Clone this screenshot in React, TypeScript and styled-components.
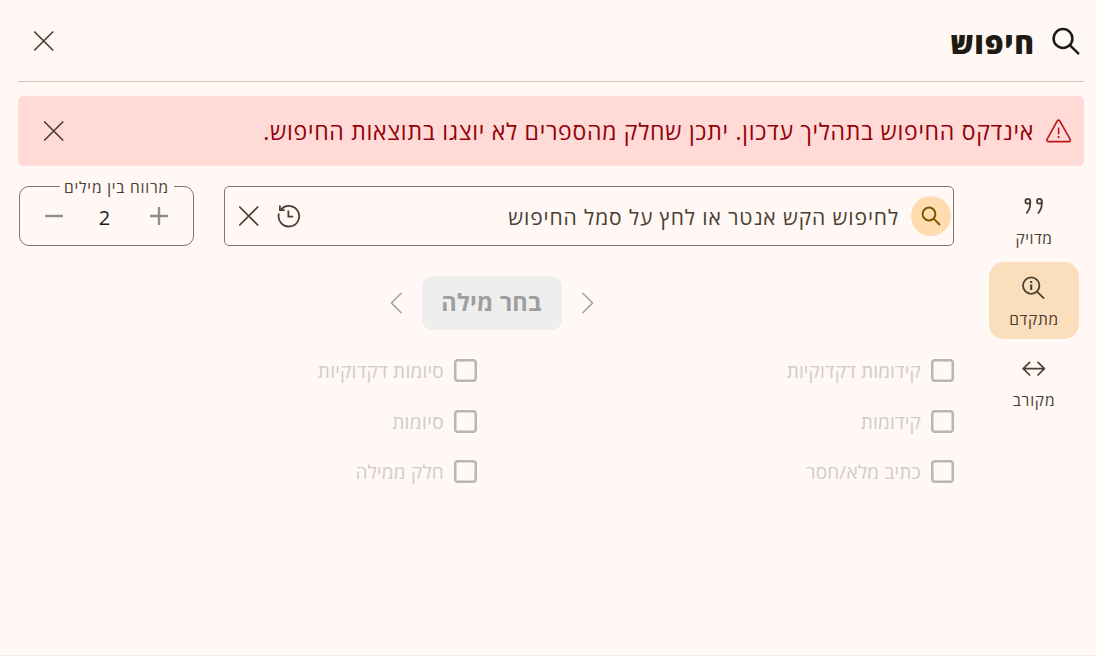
import { ReactNode, useState } from 'react';
import styled, { createGlobalStyle, css } from 'styled-components';

const GlobalStyle = createGlobalStyle`
  *,
  *::before,
  *::after {
    box-sizing: border-box;
  }

  body {
    margin: 0;
    background-color: #fff8f5;
    color: #1f1b13;
    font-family: 'Open Sans', 'Noto Sans', 'DejaVu Sans', sans-serif;
  }

  button {
    border: none;
    padding: 0;
    margin: 0;
    background: none;
    color: inherit;
    font-family: inherit;
  }

  svg {
    display: block;
    flex-shrink: 0;
    fill: none;
    stroke: currentColor;
  }
`;

interface TextProps {
  $tracking?: number;
}

const Page = styled.div`
  height: 656px;
  padding: 0 12px 0 18px;
  overflow: hidden;
  border-bottom: 1px solid #f1ede9;
`;

const Header = styled.header`
  display: flex;
  align-items: center;
  height: 82px;
  padding: 0 4px 0 15.5px;
  border-bottom: 1px solid #d2c5b4;
`;

const Title = styled.h1<TextProps>`
  margin: 5px 17.5px 0 auto;
  font-size: 30px;
  font-weight: 800;
  line-height: 44px;
  letter-spacing: ${(props) => props.$tracking ?? 0}px;
`;

const IconButton = styled.button`
  display: grid;
  place-items: center;
  color: #4a4032;
`;

const Banner = styled.div`
  display: flex;
  align-items: center;
  height: 70px;
  margin: 14px 0 20px;
  padding: 0 12px 0 25.5px;
  border-radius: 5px;
  background-color: #ffdad6;
  color: #ba1a1a;
`;

const BannerText = styled.p<TextProps>`
  margin: 0 12px 0 auto;
  color: #93000a;
  font-size: 23px;
  line-height: 34px;
  white-space: nowrap;
  letter-spacing: ${(props) => props.$tracking ?? 0}px;
`;

const Body = styled.div`
  display: flex;
`;

const Modes = styled.nav`
  display: flex;
  flex-direction: column;
  gap: 4px;
  width: 90px;
  margin: -5px 5px 0 35px;
`;

const ModeButton = styled.button<{ $active: boolean }>`
  display: flex;
  flex-direction: column;
  align-items: center;
  gap: 8px;
  height: 77px;
  padding-top: 13px;
  border-radius: 15px;
  color: #4a4032;

  ${(props) =>
    props.$active &&
    css`
      background-color: #fbdebc;
    `}
`;

const ModeLabel = styled.span<TextProps>`
  font-size: 15.5px;
  line-height: 24px;
  letter-spacing: ${(props) => props.$tracking ?? 0}px;
`;

const Content = styled.main`
  flex: 1;
`;

const SearchRow = styled.div`
  display: flex;
  gap: 30px;
`;

const SearchField = styled.div`
  display: flex;
  align-items: center;
  width: 730px;
  height: 60px;
  padding: 0 2px 0 14px;
  border: 1px solid #7f7667;
  border-radius: 5px;
  color: #4a4032;
`;

const SearchButton = styled.button`
  display: grid;
  place-items: center;
  width: 40px;
  height: 40px;
  border-radius: 50%;
  background-color: #ffddb0;
  color: #805600;
`;

const Placeholder = styled.span<TextProps>`
  margin: 2px 12px 0 auto;
  font-size: 21px;
  line-height: 32px;
  letter-spacing: ${(props) => props.$tracking ?? 0}px;
`;

const FieldActions = styled.div`
  display: flex;
  align-items: center;
  gap: 18px;
`;

const Stepper = styled.div`
  display: flex;
  align-items: center;
  justify-content: space-between;
  width: 175px;
  height: 60px;
  padding: 0 24px;
  position: relative;
  border: 1px solid #7f7667;
  border-radius: 10px;
`;

const StepperLabel = styled.span<TextProps>`
  position: absolute;
  top: -12px;
  right: 19px;
  padding: 0 5px 0 4px;
  background-color: #fff8f5;
  color: #4a4032;
  font-size: 15.5px;
  line-height: 24px;
  white-space: nowrap;
  letter-spacing: ${(props) => props.$tracking ?? 0}px;
`;

const StepButton = styled(IconButton)`
  color: #8f8c89;
`;

const StepperValue = styled.span`
  padding: 4px 0 0 0;
  margin-right: 4px;
  color: #1f1b13;
  font-size: 20px;
  line-height: 28px;
`;

const WordPicker = styled.div`
  display: flex;
  align-items: center;
  justify-content: center;
  gap: 18px;
  width: 730px;
  height: 54px;
  margin: 30px 0 26px;
  padding-right: 195px;
  color: #aaa5a1;
`;

const WordButton = styled.button<TextProps>`
  width: 140px;
  height: 54px;
  padding-bottom: 2px;
  border-radius: 10px;
  background-color: #eeeeee;
  color: #9e9e9e;
  font-size: 23.5px;
  font-weight: 700;
  white-space: nowrap;
  letter-spacing: ${(props) => props.$tracking ?? 0}px;
`;

const Options = styled.div`
  display: grid;
  grid-template-columns: 477px 440px;
  grid-auto-rows: 50.5px;
`;

const Option = styled.label<TextProps>`
  display: flex;
  align-items: flex-start;
  gap: 10px;
  color: #d2ccc8;
  font-size: 19px;
  line-height: 31px;
  letter-spacing: ${(props) => props.$tracking ?? 0}px;
`;

const CheckBox = styled.span`
  width: 23px;
  height: 23px;
  margin-top: 3px;
  border: 2px solid #bab5b1;
  border-radius: 4px;
  box-shadow: inset 0 0 0 0.5px #bab5b1;
`;

function CrossIcon() {
  return (
    <svg width="20" height="20" viewBox="0 0 20 20" strokeWidth="1.7" strokeLinecap="round">
      <path d="M.7 1l18 18M18.7 1l-18 18" />
    </svg>
  );
}

function SearchIcon() {
  return (
    <svg width="28" height="28" viewBox="0 0 28 28" strokeWidth="2.5">
      <circle cx="11" cy="11.5" r="9.4" />
      <path d="M17.8 18.2l8.4 8.2" strokeLinecap="round" />
    </svg>
  );
}

function SearchSmallIcon() {
  return (
    <svg width="20" height="20" viewBox="0 0 20 20" strokeWidth="2">
      <circle cx="8" cy="8" r="6.4" />
      <path d="M12.6 12.6l6.4 6.4" />
    </svg>
  );
}

function WarningIcon() {
  return (
    <svg width="26" height="24" viewBox="0 0 26 24" strokeWidth="1.6" strokeLinejoin="round">
      <path d="M11.2 2Q12.5.2 13.8 2L24.2 20.4Q24.8 22.4 22.8 22.6H2.2Q.4 22.4 1 20.4Z" />
      <path d="M12.6 8.4v6.8M12.6 17v2.2" />
    </svg>
  );
}

function HistoryIcon() {
  return (
    <svg width="24" height="24" viewBox="0 0 24 24" strokeWidth="1.8">
      <path d="M1.9 9.6A10.3 10.3 0 1 0 4.6 4.9L3 6.2" />
      <path d="M2.9 1.4v4.7h4.8" />
      <path d="M11.4 6.5v6.2h4.8" />
    </svg>
  );
}

function QuoteIcon() {
  return (
    <svg width="24" height="24" viewBox="0 0 24 24" strokeWidth="1.8" strokeLinecap="round">
      <circle cx="5.8" cy="7.2" r="2.4" />
      <path d="M8.2 7.2c.5 4.6-.6 8.4-3.4 11.6" />
      <circle cx="17.4" cy="7.2" r="2.4" />
      <path d="M19.8 7.2c.5 4.6-.6 8.4-3.4 11.6" />
    </svg>
  );
}

function SearchInfoIcon() {
  return (
    <svg width="24" height="24" viewBox="0 0 24 24" strokeWidth="1.8">
      <circle cx="9.2" cy="10.6" r="8.2" />
      <path d="M15.1 16.6l7 7" />
      <path d="M9.2 9.6v5.5M9.2 6v2" strokeWidth="2.1" />
    </svg>
  );
}

function RangeIcon() {
  return (
    <svg width="24" height="24" viewBox="0 0 24 24" strokeWidth="1.7" strokeLinecap="round" strokeLinejoin="round">
      <path d="M1.2 12.7h21.2M7.6 6.4l-6.4 6.3 6.4 6.3M16 6.4l6.4 6.3-6.4 6.3" />
    </svg>
  );
}

function ChevronIcon({ direction }: { direction: 'left' | 'right' }) {
  return (
    <svg width="15" height="22" viewBox="0 0 15 22" strokeWidth="1.7">
      <path d={direction === 'left' ? 'M12.5 1L2.5 11l10 10' : 'M2.5 1l10 10-10 10'} />
    </svg>
  );
}

interface Mode {
  id: string;
  label: string;
  tracking: number;
  icon: ReactNode;
}

const modes: Mode[] = [
  { id: 'exact', label: 'מדויק', tracking: 0.5, icon: <QuoteIcon /> },
  { id: 'advanced', label: 'מתקדם', tracking: 0.7, icon: <SearchInfoIcon /> },
  { id: 'fuzzy', label: 'מקורב', tracking: 0.8, icon: <RangeIcon /> },
];

const options = [
  { label: 'קידומות דקדוקיות', tracking: 0.15 },
  { label: 'סיומות דקדוקיות', tracking: 0.25 },
  { label: 'קידומות', tracking: 0.2 },
  { label: 'סיומות', tracking: 0.4 },
  { label: 'כתיב מלא/חסר', tracking: 0.2 },
  { label: 'חלק ממילה', tracking: 0.2 },
];

export default function App() {
  const [mode, setMode] = useState('advanced');
  const [spacing, setSpacing] = useState(2);

  return (
    <>
      <GlobalStyle />
      <Page dir="rtl">
        <Header>
          <SearchIcon />
          <Title $tracking={0.6}>חיפוש</Title>
          <IconButton>
            <CrossIcon />
          </IconButton>
        </Header>

        <Banner>
          <WarningIcon />
          <BannerText $tracking={0.72}>
            אינדקס החיפוש בתהליך עדכון. יתכן שחלק מהספרים לא יוצגו בתוצאות החיפוש.
          </BannerText>
          <IconButton>
            <CrossIcon />
          </IconButton>
        </Banner>

        <Body>
          <Modes>
            {modes.map((item) => (
              <ModeButton
                key={item.id}
                $active={item.id === mode}
                onClick={() => setMode(item.id)}
              >
                {item.icon}
                <ModeLabel $tracking={item.tracking}>{item.label}</ModeLabel>
              </ModeButton>
            ))}
          </Modes>

          <Content>
            <SearchRow>
              <SearchField>
                <SearchButton>
                  <SearchSmallIcon />
                </SearchButton>
                <Placeholder $tracking={0.9}>לחיפוש הקש אנטר או לחץ על סמל החיפוש</Placeholder>
                <FieldActions>
                  <HistoryIcon />
                  <CrossIcon />
                </FieldActions>
              </SearchField>

              <Stepper>
                <StepperLabel $tracking={0.8}>מרווח בין מילים</StepperLabel>
                <StepButton onClick={() => setSpacing(spacing + 1)}>
                  <svg width="20" height="20" viewBox="0 0 20 20" strokeWidth="2.4">
                    <path d="M1 10h18M10 1v18" />
                  </svg>
                </StepButton>
                <StepperValue>{spacing}</StepperValue>
                <StepButton onClick={() => setSpacing(spacing - 1)}>
                  <svg width="20" height="20" viewBox="0 0 20 20" strokeWidth="2.4">
                    <path d="M1 10h18" />
                  </svg>
                </StepButton>
              </Stepper>
            </SearchRow>

            <WordPicker>
              <ChevronIcon direction="right" />
              <WordButton $tracking={0.2}>בחר מילה</WordButton>
              <ChevronIcon direction="left" />
            </WordPicker>

            <Options>
              {options.map((option) => (
                <Option key={option.label} $tracking={option.tracking}>
                  <CheckBox />
                  {option.label}
                </Option>
              ))}
            </Options>
          </Content>
        </Body>
      </Page>
    </>
  );
}
